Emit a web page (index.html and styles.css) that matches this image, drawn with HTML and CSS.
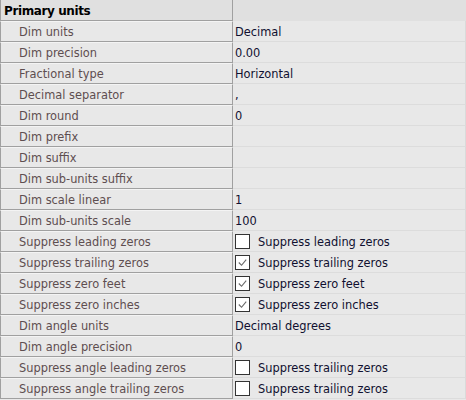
FILE: index.html
```html
<!DOCTYPE html>
<html>
<head>
<meta charset="utf-8">
<link rel="stylesheet" href="styles.css">
</head>
<body>
<div class="grid">
  <div class="hdr-l">Primary units</div><div class="hdr-r"></div>
  <div class="lbl">Dim units</div><div class="val">Decimal</div>
  <div class="lbl">Dim precision</div><div class="val">0.00</div>
  <div class="lbl">Fractional type</div><div class="val">Horizontal</div>
  <div class="lbl">Decimal separator</div><div class="val">,</div>
  <div class="lbl">Dim round</div><div class="val">0</div>
  <div class="lbl">Dim prefix</div><div class="val"></div>
  <div class="lbl">Dim suffix</div><div class="val"></div>
  <div class="lbl">Dim sub-units suffix</div><div class="val"></div>
  <div class="lbl">Dim scale linear</div><div class="val">1</div>
  <div class="lbl">Dim sub-units scale</div><div class="val">100</div>
  <div class="lbl">Suppress leading zeros</div><div class="val"><span class="cb"></span>Suppress leading zeros</div>
  <div class="lbl">Suppress trailing zeros</div><div class="val"><span class="cb"><svg viewBox="0 0 14 14" class="ck"><path d="M3 7 L6 10 L11 4" /></svg></span>Suppress trailing zeros</div>
  <div class="lbl">Suppress zero feet</div><div class="val"><span class="cb"><svg viewBox="0 0 14 14" class="ck"><path d="M3 7 L6 10 L11 4" /></svg></span>Suppress zero feet</div>
  <div class="lbl">Suppress zero inches</div><div class="val"><span class="cb"><svg viewBox="0 0 14 14" class="ck"><path d="M3 7 L6 10 L11 4" /></svg></span>Suppress zero inches</div>
  <div class="lbl">Dim angle units</div><div class="val">Decimal degrees</div>
  <div class="lbl">Dim angle precision</div><div class="val">0</div>
  <div class="lbl">Suppress angle leading zeros</div><div class="val"><span class="cb"></span>Suppress trailing zeros</div>
  <div class="lbl">Suppress angle trailing zeros</div><div class="val"><span class="cb"></span>Suppress trailing zeros</div>
</div>
</body>
</html>
```
FILE: styles.css
```css
html, body {
  margin: 0;
  padding: 0;
  background: #e8e8e8;
}
.grid {
  display: grid;
  grid-template-columns: 233px 233px;
  grid-auto-rows: 21px;
  width: 466px;
  font-family: "DejaVu Sans", sans-serif;
  font-size: 11.4px;
}
.hdr-l {
  background: #e0e0e0;
  border-left: 1px solid #a0a0a0;
  border-right: 1px solid #a0a0a0;
  border-bottom: 1px solid #a0a0a0;
  font-weight: bold;
  color: #000;
  padding-left: 3px;
  padding-top: 1px;
  display: flex;
  align-items: center;
  font-size: 12px;
  letter-spacing: -0.4px;
}
.hdr-r {
  background: #e0e0e0;
}
.lbl {
  background: #e8e8e8;
  border-left: 1px solid #a0a0a0;
  border-right: 1px solid #a0a0a0;
  border-bottom: 1px solid #a0a0a0;
  border-top: 1px solid #f4f4f4;
  color: #5e4e50;
  padding-left: 18px;
  padding-top: 1px;
  display: flex;
  align-items: center;
  white-space: nowrap;
}
.val {
  background: #e8e8e8;
  border-bottom: 1px solid #dcdcdc;
  border-right: 1px solid #dadada;
  color: #101030;
  padding-left: 2px;
  padding-top: 1px;
  display: flex;
  align-items: center;
  white-space: nowrap;
}
.cb {
  width: 15px;
  height: 15px;
  box-sizing: border-box;
  border: 1px solid #333;
  background: #fff;
  margin-right: 8px;
  margin-top: -1px;
  display: inline-flex;
}
.ck {
  width: 13px;
  height: 13px;
}
.ck path {
  fill: none;
  stroke: #6a6a6a;
  stroke-width: 1.2;
}
```
